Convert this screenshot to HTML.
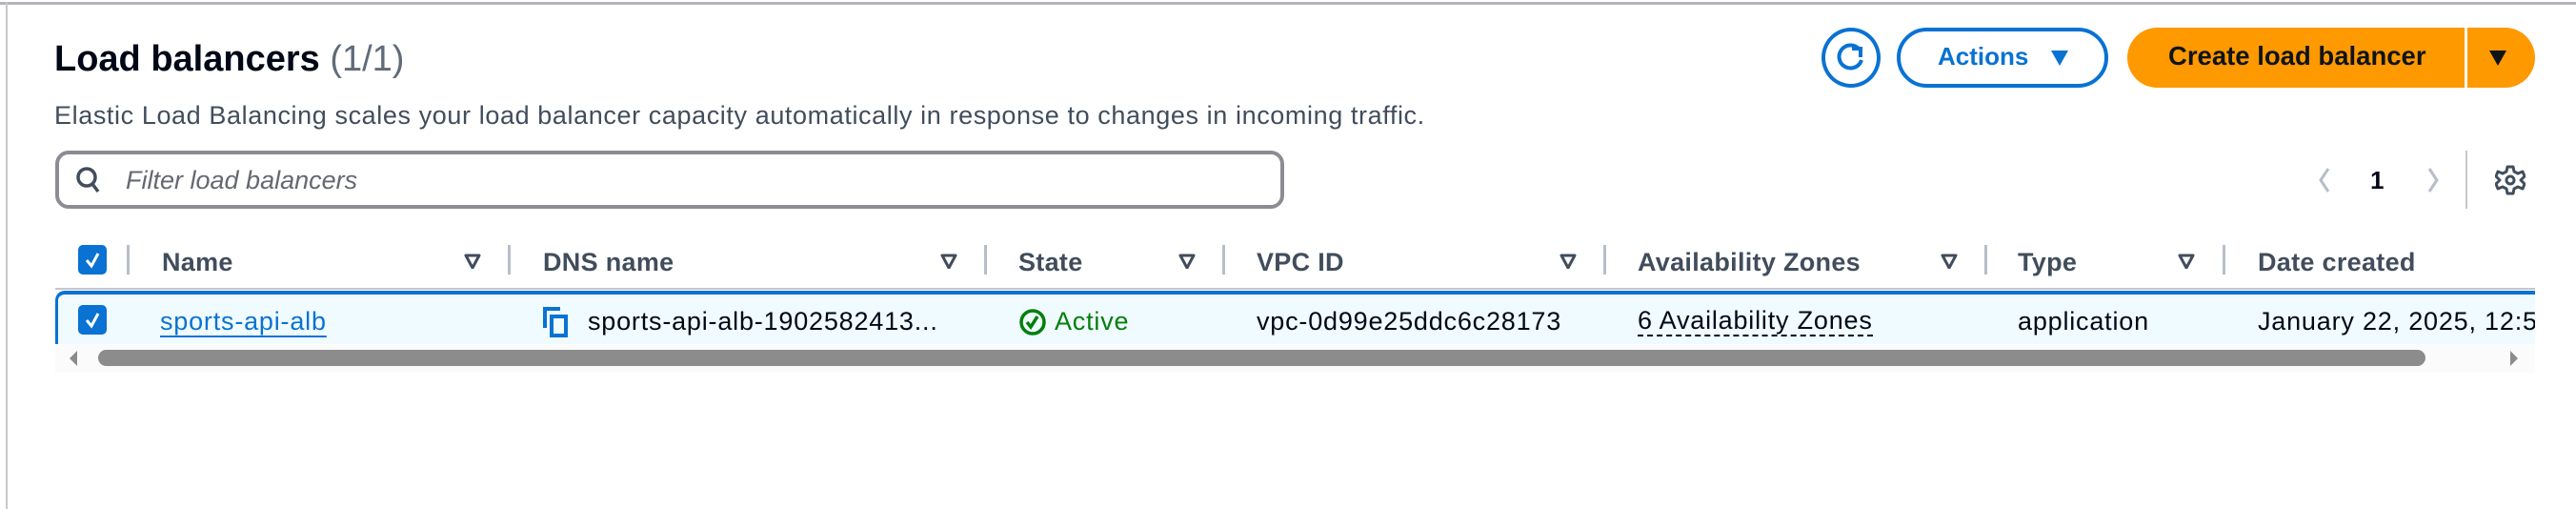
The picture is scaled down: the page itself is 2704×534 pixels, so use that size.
<!DOCTYPE html>
<html><head><meta charset="utf-8"><style>
*{margin:0;padding:0;box-sizing:border-box}
body{width:2704px;height:534px;background:#fff;position:relative;overflow:hidden;font-family:"Liberation Sans",sans-serif;color:#000716}
.a{position:absolute;white-space:nowrap}
.h{font-weight:bold;font-size:27px;letter-spacing:0.3px;color:#414d5c;top:259px;line-height:32px}
.c{font-size:27px;letter-spacing:0.8px;top:321px;line-height:32px}
.sep{position:absolute;top:257px;width:3px;height:31px;background:#b6bec9}
.f{position:absolute;top:266px;width:18px;height:16px}
.cb{position:absolute;left:82px;width:30px;height:31px;background:#0972d3;border-radius:5px}
</style></head><body>
<div class="a" style="left:0;top:2px;width:2704px;height:3px;background:#b4b4bb"></div>
<div class="a" style="left:6px;top:2px;width:2px;height:532px;background:#c6c6cd"></div>

<div class="a" style="left:57px;top:40px;font-size:38px;line-height:44px;font-weight:bold">Load balancers <span style="font-weight:normal;color:#5f6b7a">(1/1)</span></div>
<div class="a" style="left:57px;top:105px;font-size:27px;letter-spacing:0.6px;line-height:32px;color:#414d5c">Elastic Load Balancing scales your load balancer capacity automatically in response to changes in incoming traffic.</div>

<div class="a" style="left:1912px;top:29px;width:62px;height:63px;border:4px solid #0972d3;border-radius:50%"></div>
<svg class="a" style="left:1925px;top:42px" width="36" height="38" viewBox="0 0 36 38"><path d="M26 9 A12 12 0 1 0 29 21" fill="none" stroke="#0972d3" stroke-width="4"/><path d="M19 9 H28 V18" fill="none" stroke="#0972d3" stroke-width="4"/></svg>
<div class="a" style="left:1991px;top:29px;width:222px;height:63px;border:4px solid #0972d3;border-radius:32px"></div>
<div class="a" style="left:2034px;top:44px;font-size:26px;line-height:30px;font-weight:bold;color:#0972d3">Actions</div>
<svg class="a" style="left:2152px;top:52px" width="20" height="18"><path d="M1 1 H19 L10 17Z" fill="#0972d3"/></svg>
<div class="a" style="left:2233px;top:29px;width:428px;height:63px;background:#ff9900;border-radius:32px"></div>
<div class="a" style="left:2587px;top:29px;width:3px;height:63px;background:#fff"></div>
<div class="a" style="left:2276px;top:43px;font-size:27.5px;line-height:32px;font-weight:bold;color:#0f141a">Create load balancer</div>
<svg class="a" style="left:2612px;top:52px" width="20" height="18"><path d="M1 1 H19 L10 17Z" fill="#0f141a"/></svg>

<div class="a" style="left:58px;top:158px;width:1290px;height:61px;border:4px solid #8c8c94;border-radius:14px"></div>
<svg class="a" style="left:78px;top:173px" width="30" height="32"><circle cx="13" cy="13" r="9" fill="none" stroke="#414d5c" stroke-width="3.5"/><path d="M19 20 L25 28" stroke="#414d5c" stroke-width="3.5"/></svg>
<div class="a" style="left:132px;top:173px;font-size:27px;line-height:32px;font-style:italic;color:#656871">Filter load balancers</div>

<svg class="a" style="left:2430px;top:174px" width="20" height="30"><path d="M14 3 L6 15 L14 27" fill="none" stroke="#b6bec9" stroke-width="3"/></svg>
<div class="a" style="left:2488px;top:174px;font-size:26px;line-height:30px;font-weight:bold">1</div>
<svg class="a" style="left:2544px;top:174px" width="20" height="30"><path d="M6 3 L14 15 L6 27" fill="none" stroke="#b6bec9" stroke-width="3"/></svg>
<div class="a" style="left:2588px;top:158px;width:2px;height:61px;background:#c6c6cd"></div>
<svg class="a" style="left:2619px;top:172px" width="32" height="34" viewBox="0 0 32 34"><path d="M13 3 H19 L20 8 L24 10 L29 8 L31 13 L27 17 L31 21 L29 26 L24 24 L20 26 L19 31 H13 L12 26 L8 24 L3 26 L1 21 L5 17 L1 13 L3 8 L8 10 L12 8Z" fill="none" stroke="#414d5c" stroke-width="3" stroke-linejoin="round"/><circle cx="16" cy="17" r="4" fill="none" stroke="#414d5c" stroke-width="3"/></svg>

<div class="cb" style="top:257px"></div>
<svg class="a" style="left:88px;top:264px" width="18" height="18"><path d="M3 9 L8 15 L15 2" fill="none" stroke="#fff" stroke-width="3"/></svg>
<div class="sep" style="left:133px"></div>
<div class="a h" style="left:170px">Name</div>
<svg class="f" style="left:487px"><path d="M2 2 H16 L9 15Z" fill="none" stroke="#414d5c" stroke-width="3" stroke-linejoin="round"/></svg>
<div class="sep" style="left:533px"></div>
<div class="a h" style="left:570px">DNS name</div>
<svg class="f" style="left:987px"><path d="M2 2 H16 L9 15Z" fill="none" stroke="#414d5c" stroke-width="3" stroke-linejoin="round"/></svg>
<div class="sep" style="left:1033px"></div>
<div class="a h" style="left:1069px">State</div>
<svg class="f" style="left:1237px"><path d="M2 2 H16 L9 15Z" fill="none" stroke="#414d5c" stroke-width="3" stroke-linejoin="round"/></svg>
<div class="sep" style="left:1283px"></div>
<div class="a h" style="left:1319px">VPC ID</div>
<svg class="f" style="left:1637px"><path d="M2 2 H16 L9 15Z" fill="none" stroke="#414d5c" stroke-width="3" stroke-linejoin="round"/></svg>
<div class="sep" style="left:1683px"></div>
<div class="a h" style="left:1719px">Availability Zones</div>
<svg class="f" style="left:2037px"><path d="M2 2 H16 L9 15Z" fill="none" stroke="#414d5c" stroke-width="3" stroke-linejoin="round"/></svg>
<div class="sep" style="left:2083px"></div>
<div class="a h" style="left:2118px">Type</div>
<svg class="f" style="left:2286px"><path d="M2 2 H16 L9 15Z" fill="none" stroke="#414d5c" stroke-width="3" stroke-linejoin="round"/></svg>
<div class="sep" style="left:2333px"></div>
<div class="a h" style="left:2370px">Date created</div>

<div class="a" style="left:58px;top:302px;width:2603px;height:2px;background:#c6c6cd"></div>
<div class="a" style="left:58px;top:305px;width:2640px;height:56px;background:#f0fbff;border-top:4px solid #0972d3;border-left:3px solid #0972d3;border-top-left-radius:10px"></div>
<div class="cb" style="top:320px"></div>
<svg class="a" style="left:88px;top:327px" width="18" height="18"><path d="M3 9 L8 15 L15 2" fill="none" stroke="#fff" stroke-width="3"/></svg>
<div class="a c" style="left:168px;color:#0972d3;text-decoration:underline;text-underline-offset:6px;text-decoration-thickness:2px">sports-api-alb</div>
<svg class="a" style="left:570px;top:322px" width="30" height="32"><path d="M2 22 V2 H18" fill="none" stroke="#0972d3" stroke-width="4"/><rect x="9" y="10" width="15" height="20" fill="none" stroke="#0972d3" stroke-width="4"/></svg>
<div class="a c" style="left:617px">sports-api-alb-1902582413...</div>
<svg class="a" style="left:1069px;top:323px" width="30" height="30"><circle cx="15" cy="15" r="12" fill="none" stroke="#037f0c" stroke-width="3.5"/><path d="M9 15 L13 20 L20 9" fill="none" stroke="#037f0c" stroke-width="3.5"/></svg>
<div class="a c" style="left:1107px;color:#037f0c">Active</div>
<div class="a c" style="left:1319px">vpc-0d99e25ddc6c28173</div>
<div class="a c" style="left:1719px;border-bottom:2px dashed #000716;line-height:30px">6 Availability Zones</div>
<div class="a c" style="left:2118px">application</div>
<div class="a c" style="left:2370px;width:291px;overflow:hidden">January 22, 2025, 12:54</div>
<div class="a" style="left:2661px;top:305px;width:43px;height:60px;background:#fff"></div>

<div class="a" style="left:58px;top:361px;width:2603px;height:30px;background:#fbfbfb"></div>
<svg class="a" style="left:70px;top:367px" width="14" height="18"><path d="M11 1 L3 9 L11 17Z" fill="#8c8c8c"/></svg>
<div class="a" style="left:103px;top:367px;width:2443px;height:17px;background:#8c8c8c;border-radius:9px"></div>
<svg class="a" style="left:2632px;top:367px" width="14" height="18"><path d="M3 1 L11 9 L3 17Z" fill="#8c8c8c"/></svg>
</body></html>
